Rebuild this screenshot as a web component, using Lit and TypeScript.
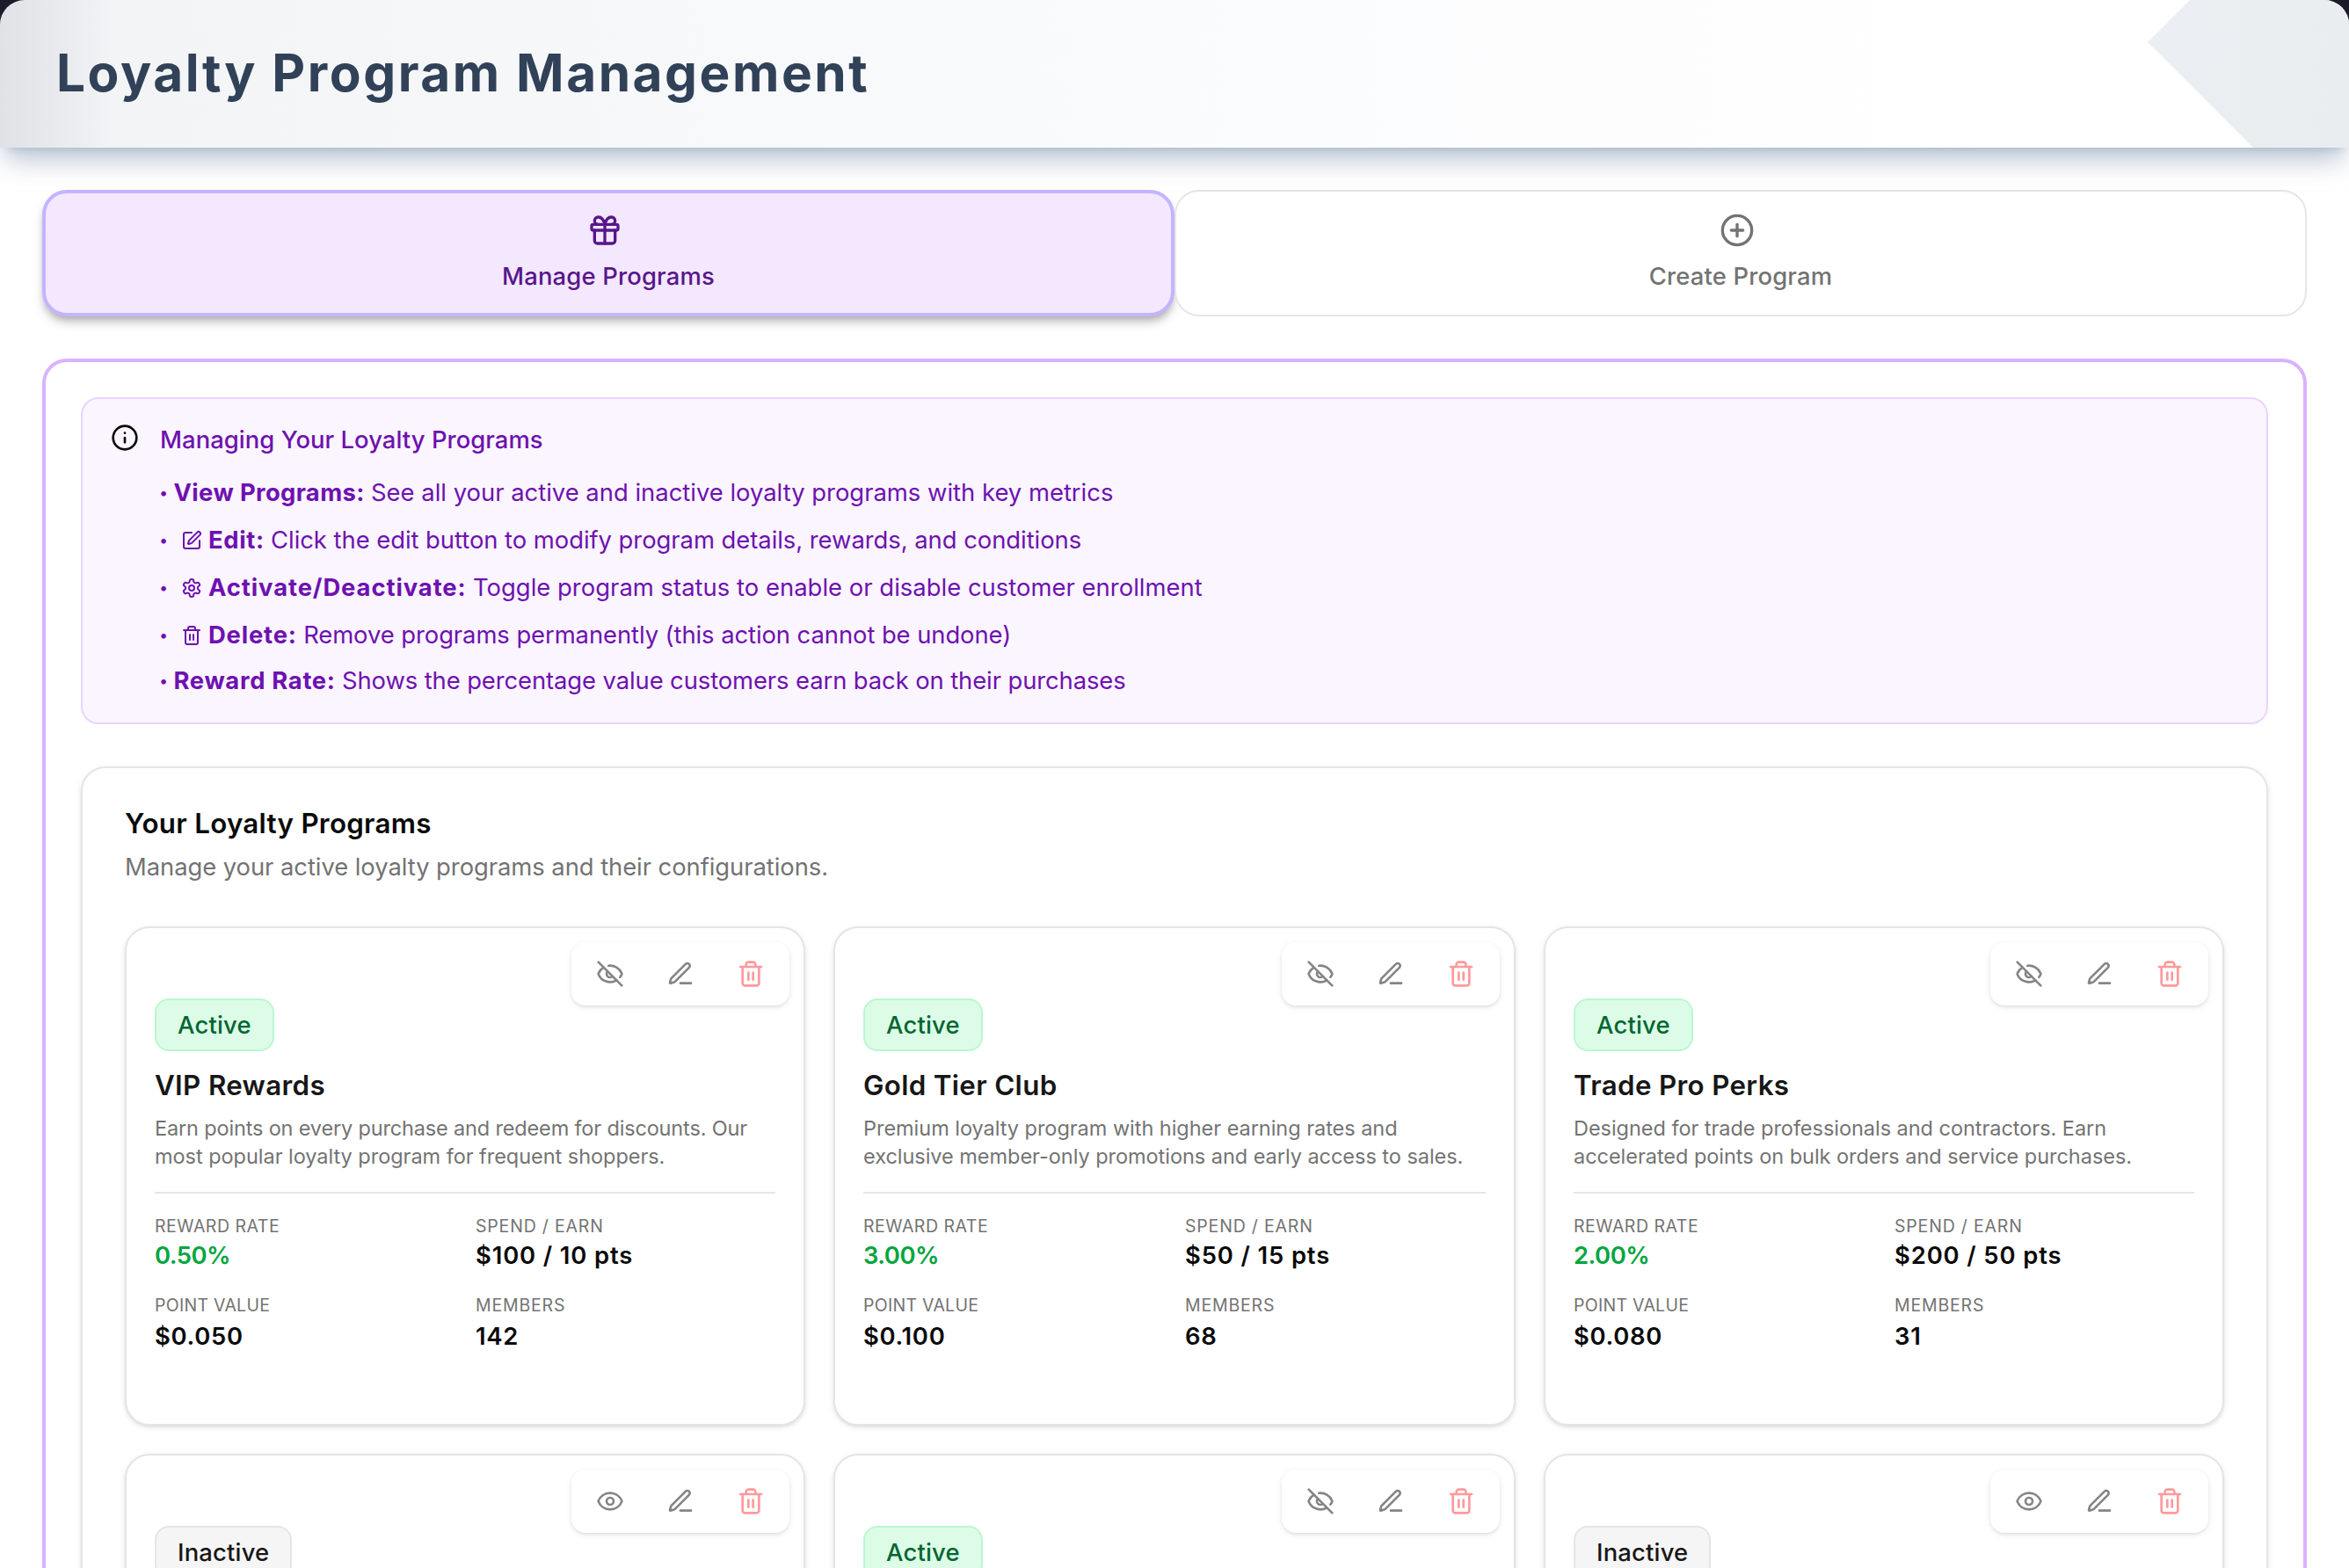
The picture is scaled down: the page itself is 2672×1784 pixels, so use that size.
import { html, css, svg, LitElement } from "lit";
import { customElement, property } from "lit/decorators.js";
import { styleMap } from "lit/directives/style-map.js";

const icons = {
  gift: svg`<rect x="3" y="8" width="18" height="4" rx="1"/><path d="M12 8v13"/><path d="M19 12v7a2 2 0 0 1-2 2H7a2 2 0 0 1-2-2v-7"/><path d="M7.5 8a2.5 2.5 0 0 1 0-5A4.8 8 0 0 1 12 8a4.8 8 0 0 1 4.5-5 2.5 2.5 0 0 1 0 5"/>`,
  plus: svg`<circle cx="12" cy="12" r="10"/><path d="M8 12h8"/><path d="M12 8v8"/>`,
  info: svg`<circle cx="12" cy="12" r="10"/><path d="M12 16v-4"/><path d="M12 8h.01"/>`,
  edit: svg`<path d="M12 3H5a2 2 0 0 0-2 2v14a2 2 0 0 0 2 2h14a2 2 0 0 0 2-2v-7"/><path d="M18.375 2.625a1 1 0 0 1 3 3l-9.013 9.014a2 2 0 0 1-.853.505l-2.873.84a.5.5 0 0 1-.62-.62l.84-2.873a2 2 0 0 1 .506-.852z"/>`,
  settings: svg`<path d="M12.22 2h-.44a2 2 0 0 0-2 2v.18a2 2 0 0 1-1 1.73l-.43.25a2 2 0 0 1-2 0l-.15-.08a2 2 0 0 0-2.73.73l-.22.38a2 2 0 0 0 .73 2.73l.15.1a2 2 0 0 1 1 1.72v.51a2 2 0 0 1-1 1.74l-.15.09a2 2 0 0 0-.73 2.73l.22.38a2 2 0 0 0 2.73.73l.15-.08a2 2 0 0 1 2 0l.43.25a2 2 0 0 1 1 1.73V20a2 2 0 0 0 2 2h.44a2 2 0 0 0 2-2v-.18a2 2 0 0 1 1-1.73l.43-.25a2 2 0 0 1 2 0l.15.08a2 2 0 0 0 2.73-.73l.22-.39a2 2 0 0 0-.73-2.73l-.15-.08a2 2 0 0 1-1-1.74v-.5a2 2 0 0 1 1-1.74l.15-.09a2 2 0 0 0 .73-2.73l-.22-.38a2 2 0 0 0-2.73-.73l-.15.08a2 2 0 0 1-2 0l-.43-.25a2 2 0 0 1-1-1.73V4a2 2 0 0 0-2-2z"/><circle cx="12" cy="12" r="3"/>`,
  trash: svg`<path d="M3 6h18"/><path d="M19 6v14c0 1-1 2-2 2H7c-1 0-2-1-2-2V6"/><path d="M8 6V4c0-1 1-2 2-2h4c1 0 2 1 2 2v2"/><path d="M10 11v6"/><path d="M14 11v6"/>`,
  pen: svg`<path d="M12 20h9"/><path d="M16.376 3.622a1 1 0 0 1 3.002 3.002L7.368 18.635a2 2 0 0 1-.855.506l-2.872.838a.5.5 0 0 1-.62-.62l.838-2.872a2 2 0 0 1 .506-.854z"/>`,
  eye: svg`<path d="M2.062 12.348a1 1 0 0 1 0-.696 10.75 10.75 0 0 1 19.876 0 1 1 0 0 1 0 .696 10.75 10.75 0 0 1-19.876 0"/><circle cx="12" cy="12" r="3"/>`,
  eyeOff: svg`<path d="M10.733 5.076a10.744 10.744 0 0 1 11.205 6.575 1 1 0 0 1 0 .696 10.747 10.747 0 0 1-1.444 2.49"/><path d="M14.084 14.158a3 3 0 0 1-4.242-4.242"/><path d="M17.479 17.499a10.75 10.75 0 0 1-15.417-5.151 1 1 0 0 1 0-.696 10.75 10.75 0 0 1 4.446-5.143"/><path d="m2 2 20 20"/>`,
};

type IconName = keyof typeof icons;

@customElement("ui-icon")
export class UiIcon extends LitElement {
  @property({ type: String }) name: IconName = "info";

  render() {
    return html`<svg viewBox="0 0 24 24" fill="none" stroke="currentColor" stroke-width="2" stroke-linecap="round" stroke-linejoin="round">${icons[this.name]}</svg>`;
  }

  static get styles() {
    return css`
:host {
  display: inline-block;
  flex: none;
  width: 32px;
  height: 32px
}

svg {
  display: block;
  width: 100%;
  height: 100%
}
    `;
  }
}

interface ProgramDetails {
  name: string;
  description: string;
  lead?: number; // letter spacing of the first description line, em
  rate: string;
  spendEarn: string;
  pointValue: string;
  members: number;
}

interface Program {
  active: boolean;
  details?: ProgramDetails;
}

@customElement("program-card")
export class ProgramCard extends LitElement {
  @property({ attribute: false }) program!: Program;

  renderDetails(d: ProgramDetails) {
    return html`
    <h3>${d.name}</h3>
    <p style=${styleMap({ "--lead": `${d.lead ?? -0.0015}em` })}>${d.description}</p>
    <dl>
      <div><dt>Reward Rate</dt><dd class="rate">${d.rate}</dd></div>
      <div><dt class="wide">Spend / Earn</dt><dd>${d.spendEarn}</dd></div>
      <div class="low"><dt class="tight">Point Value</dt><dd>${d.pointValue}</dd></div>
      <div class="low"><dt class="wide">Members</dt><dd>${d.members}</dd></div>
    </dl>
    `;
  }

  render() {
    const { active, details } = this.program;
    return html`
    <div class="actions">
      <button title="Toggle"><ui-icon name="${active ? "eyeOff" : "eye"}"></ui-icon></button>
      <button title="Edit"><ui-icon name="pen"></ui-icon></button>
      <button title="Delete" class="danger"><ui-icon name="trash"></ui-icon></button>
    </div>
    <span class="badge ${active ? "active" : ""}">${active ? "Active" : "Inactive"}</span>
    ${details ? this.renderDetails(details) : ""}
    `;
  }

  static get styles() {
    return css`
:host {
  display: flex;
  flex-direction: column;
  align-items: flex-start;
  position: relative;
  box-sizing: border-box;
  height: 568px;
  padding: 80px 32px 0;
  border: 2px solid #e5e5e5;
  border-radius: 28px;
  background: #fff;
  box-shadow: 0 2px 6px rgba(0, 0, 0, 0.1), 0 2px 4px -2px rgba(0, 0, 0, 0.1)
}

.actions {
  position: absolute;
  top: 16px;
  right: 16px;
  display: flex;
  gap: 8px;
  padding: 8px;
  border-radius: 16px;
  background: #fff;
  box-shadow: 0 2px 6px rgba(0, 0, 0, 0.1), 0 2px 4px -2px rgba(0, 0, 0, 0.1)
}

button {
  display: flex;
  align-items: center;
  justify-content: center;
  width: 72px;
  height: 56px;
  padding: 0;
  border: 0;
  background: none;
  color: #858585
}

.danger {
  color: #ff999c
}

.badge {
  box-sizing: border-box;
  height: 60px;
  padding: 0 24px;
  border: 2px solid #e5e5e5;
  border-radius: 16px;
  background: #f5f5f5;
  color: #171717;
  font-size: 27.4px;
  font-weight: 500;
  line-height: 57px;
  letter-spacing: 0.007em
}

.badge.active {
  border-color: #b9f8cf;
  background: #dcfce7;
  color: #016630
}

h3 {
  margin: 19px 0 0;
  font-size: 31.3px;
  font-weight: 600;
  line-height: 40px;
  letter-spacing: 0.011em;
  color: #171717
}

p {
  margin: 13px 0 24px;
  height: 64px;
  font-size: 23.5px;
  line-height: 32px;
  letter-spacing: -0.0015em;
  color: #737373
}

p::first-line {
  letter-spacing: var(--lead)
}

dl {
  display: grid;
  grid-template-columns: 1fr 1fr;
  gap: 24px;
  align-self: stretch;
  margin: 0;
  padding-top: 24px;
  border-top: 2px solid #e5e5e5
}

dt {
  font-size: 19.5px;
  line-height: 26px;
  letter-spacing: 0.026em;
  text-transform: uppercase;
  color: #737373
}

dt.wide {
  letter-spacing: 0.042em
}

dt.tight {
  letter-spacing: 0.014em
}

dd {
  margin: 0;
  font-size: 27.4px;
  font-weight: 600;
  line-height: 40px;
  letter-spacing: 0.032em;
  color: #0a0a0a
}

dd.rate {
  letter-spacing: -0.018em;
  color: #00a63e
}

.low dd {
  line-height: 45px;
  letter-spacing: 0.026em
}
    `;
  }
}

// spacing values are in em: one for the bold label, one for the text after it
const tips: { icon?: IconName; label: string; labelSpacing: number; text: string; textSpacing: number }[] = [
  { label: "View Programs:", labelSpacing: 0.0134, text: "See all your active and inactive loyalty programs with key metrics", textSpacing: 0.0002 },
  { icon: "edit", label: "Edit:", labelSpacing: 0.024, text: "Click the edit button to modify program details, rewards, and conditions", textSpacing: -0.0013 },
  { icon: "settings", label: "Activate/Deactivate:", labelSpacing: 0.0335, text: "Toggle program status to enable or disable customer enrollment", textSpacing: 0.0012 },
  { icon: "trash", label: "Delete:", labelSpacing: 0.03, text: "Remove programs permanently (this action cannot be undone)", textSpacing: -0.0024 },
  { label: "Reward Rate:", labelSpacing: 0.025, text: "Shows the percentage value customers earn back on their purchases", textSpacing: -0.0033 },
];

const programs: Program[] = [
  {
    active: true,
    details: {
      name: "VIP Rewards",
      description: "Earn points on every purchase and redeem for discounts. Our most popular loyalty program for frequent shoppers.",
      lead: -0.0068,
      rate: "0.50%",
      spendEarn: "$100 / 10 pts",
      pointValue: "$0.050",
      members: 142,
    },
  },
  {
    active: true,
    details: {
      name: "Gold Tier Club",
      description: "Premium loyalty program with higher earning rates and exclusive member-only promotions and early access to sales.",
      rate: "3.00%",
      spendEarn: "$50 / 15 pts",
      pointValue: "$0.100",
      members: 68,
    },
  },
  {
    active: true,
    details: {
      name: "Trade Pro Perks",
      description: "Designed for trade professionals and contractors. Earn accelerated points on bulk orders and service purchases.",
      rate: "2.00%",
      spendEarn: "$200 / 50 pts",
      pointValue: "$0.080",
      members: 31,
    },
  },
  { active: false },
  { active: true },
  { active: false },
];

@customElement("app-root")
export class AppRoot extends LitElement {
  render() {
    return html`
    <div class="top">
      <header><h1>Loyalty Program Management</h1></header>
    </div>
    <main>
      <nav>
        <div class="tab selected"><ui-icon name="gift"></ui-icon>Manage Programs</div>
        <div class="tab"><ui-icon name="plus"></ui-icon>Create Program</div>
      </nav>
      <section class="panel">
        <div class="notice">
          <ui-icon name="info"></ui-icon>
          <div>
            <h4>Managing Your Loyalty Programs</h4>
            <ul>
              ${tips.map((tip) => html`
              <li><span class="dot">•</span>${tip.icon ? html`<ui-icon name="${tip.icon}"></ui-icon>` : ""}<strong style=${styleMap({ letterSpacing: `${tip.labelSpacing}em` })}>${tip.label}</strong><span style=${styleMap({ letterSpacing: `${tip.textSpacing}em` })}>${tip.text}</span></li>`)}
            </ul>
          </div>
        </div>
        <div class="programs">
          <h2>Your Loyalty Programs</h2>
          <p>Manage your active loyalty programs and their configurations.</p>
          <div class="grid">
            ${programs.map((p) => html`<program-card .program="${p}"></program-card>`)}
          </div>
        </div>
      </section>
    </main>
    `;
  }

  static get styles() {
    return css`
:host {
  display: block;
  height: 1784px;
  overflow: hidden;
  background: #fff;
  font-family: Inter, "Liberation Sans", sans-serif
}

/* dark page shows only behind the rounded header corners */
.top {
  height: 168px;
  background: linear-gradient(#1b1a29 28px, #fff 28px)
}

header {
  display: flex;
  align-items: center;
  position: relative;
  box-sizing: border-box;
  height: 168px;
  padding: 0 0 2px 64px;
  border-radius: 28px 28px 0 0;
  background: linear-gradient(90deg, #e1e2e7 0, #e9eaed 65px, #f3f4f6 130px, #f8fafb 1050px, #fdfdfe 1800px, #fff 2300px);
  box-shadow: 0 20px 30px -6px rgba(144, 161, 185, 0.6), 0 8px 12px -8px rgba(144, 161, 185, 0.6)
}

header::after {
  content: "";
  position: absolute;
  top: 0;
  right: 0;
  width: 229px;
  height: 168px;
  border-top-right-radius: 28px;
  background: linear-gradient(90deg, #ebeef2, #e9edf0);
  clip-path: polygon(48px 0, 100% 0, 100% 100%, 120px 100%, 0 48px)
}

h1 {
  margin: 0;
  font-size: 58.5px;
  font-weight: 700;
  line-height: 72px;
  letter-spacing: 0.0435em;
  color: #314158
}

main {
  padding: 48px 48px 0
}

nav {
  display: grid;
  grid-template-columns: 1fr 1fr
}

.tab {
  display: flex;
  flex-direction: column;
  align-items: center;
  justify-content: center;
  gap: 12px;
  box-sizing: border-box;
  height: 144px;
  border: 2px solid #e5e5e5;
  border-radius: 28px;
  background: #fff;
  color: #737373;
  font-size: 27.4px;
  font-weight: 500;
  line-height: 40px;
  letter-spacing: 0.0065em
}

.tab ui-icon {
  width: 40px;
  height: 40px;
  margin-right: 8px
}

.tab.selected {
  border: 4px solid #c4b4ff;
  background: #f3e8ff;
  color: #59168b;
  box-shadow: 0 8px 12px -2px rgba(0, 0, 0, 0.26), 0 4px 8px -4px rgba(0, 0, 0, 0.18)
}

.panel {
  margin-top: 48px;
  padding: 40px;
  border: 4px solid #dab2ff;
  border-radius: 28px;
  background: #fff
}

.notice {
  display: flex;
  gap: 24px;
  padding: 24px 32px 25px;
  border: 2px solid #e9d4ff;
  border-radius: 20px;
  background: #faf5ff;
  color: #6e11b0;
  font-size: 27.4px
}

.notice > ui-icon {
  margin-top: 4px;
  color: #0a0a0a
}

h4 {
  margin: 0;
  font-size: 27.4px;
  font-weight: 500;
  line-height: 44px;
  letter-spacing: 0.002em
}

ul {
  display: flex;
  flex-direction: column;
  gap: 8px;
  margin: 15px 0 0;
  padding: 0;
  list-style: none
}

li {
  display: flex;
  align-items: center;
  height: 46px
}

li:last-child {
  margin-top: -2px
}

.dot {
  width: 16.5px;
  margin-left: -1px;
  font-size: 18px
}

li ui-icon {
  width: 24px;
  height: 24px;
  margin: 2px 7px 0 8.5px
}

strong {
  margin-right: 7.3px;
  font-weight: 700
}

.programs {
  margin-top: 48px;
  padding: 48px;
  border: 2px solid #e5e5e5;
  border-radius: 28px;
  box-shadow: 0 2px 6px rgba(0, 0, 0, 0.1), 0 2px 4px -2px rgba(0, 0, 0, 0.1)
}

h2 {
  margin: 0;
  font-size: 31.3px;
  font-weight: 600;
  line-height: 30px;
  letter-spacing: 0.009em;
  color: #0a0a0a
}

.programs > p {
  margin: 14px 0 48px;
  font-size: 27.4px;
  line-height: 40px;
  letter-spacing: -0.002em;
  color: #737373
}

.grid {
  display: grid;
  grid-template-columns: 774fr 776fr 774fr;
  gap: 32px
}
    `;
  }
}
